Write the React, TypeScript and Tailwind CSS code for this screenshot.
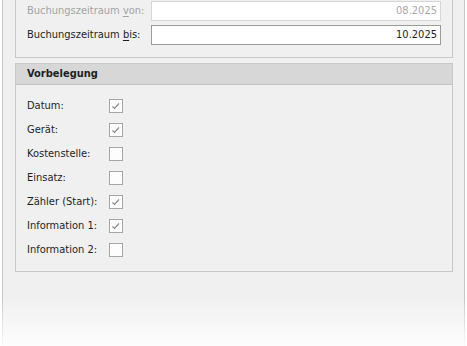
const font = { fontFamily: '"DejaVu Sans Condensed", "Liberation Sans", sans-serif' };

const felder = [
  { label: 'Datum:', checked: true },
  { label: 'Gerät:', checked: true },
  { label: 'Kostenstelle:', checked: false },
  { label: 'Einsatz:', checked: false },
  { label: 'Zähler (Start):', checked: true },
  { label: 'Information 1:', checked: true },
  { label: 'Information 2:', checked: false },
];

const Checkbox = ({ checked }: { checked: boolean }) => (
  <div className="h-[14px] w-[14px] border border-[#a6a6a6] bg-[#fdfdfd]">
    {checked && (
      <svg width="12" height="12" viewBox="0 0 12 12" className="block">
        <path d="M2.5 6.5 L4.5 8.5 L9 3.5" fill="none" stroke="#8a8a8a" strokeWidth="1.2" />
      </svg>
    )}
  </div>
);

const ZeitraumRow = ({ label, ul, rest, value, disabled }: { label: string; ul: string; rest: string; value: string; disabled?: boolean }) => (
  <div className="flex h-[20px] items-center">
    <div className={`w-[124px] ${disabled ? 'text-[#a3a3a3]' : 'text-[#1e1e1e]'}`}>
      {label}
      <span className="underline underline-offset-2">{ul}</span>
      {rest}
    </div>
    <div
      className={`flex h-[20px] w-[290px] items-center justify-end border bg-white pr-[3px] ${
        disabled ? 'border-[#d6d6d6] text-[#a9a9a9]' : 'border-[#9a9a9a] text-[#1e1e1e]'
      }`}
    >
      {value}
    </div>
  </div>
);

export default function App() {
  return (
    <div className="relative h-[346px] w-[467px] overflow-hidden bg-white text-[11px]" style={font}>
      <div className="ml-[2px] h-full w-[463px] border-x border-[#c6c6c6] bg-[#f0f0f0] pl-[12px] pr-[11px]">
        {/* Buchungszeitraum */}
        <div className="flex flex-col gap-[4px] border-x border-b border-[#c8c8c8] pb-[12px] pl-[11px] pr-[11px] pt-[1px]">
          <ZeitraumRow label="Buchungszeitraum " ul="v" rest="on:" value="08.2025" disabled />
          <ZeitraumRow label="Buchungszeitraum " ul="b" rest="is:" value="10.2025" />
        </div>

        {/* Vorbelegung */}
        <div className="mt-[5px] border border-[#c8c8c8]">
          <div className="flex h-[21px] items-center border-b border-[#c4c4c4] bg-[#d7d7d7] pl-[11px] font-bold text-[#1e1e1e]">
            Vorbelegung
          </div>
          <div className="flex flex-col py-[9px] pl-[11px]">
            {felder.map((f) => (
              <div key={f.label} className="flex h-[24px] items-center">
                <div className="w-[82px] text-[#1e1e1e]">{f.label}</div>
                <Checkbox checked={f.checked} />
              </div>
            ))}
          </div>
        </div>
      </div>
      <div className="pointer-events-none absolute bottom-0 left-0 h-[50px] w-full bg-linear-to-b from-white/0 to-white/90" />
    </div>
  );
}
